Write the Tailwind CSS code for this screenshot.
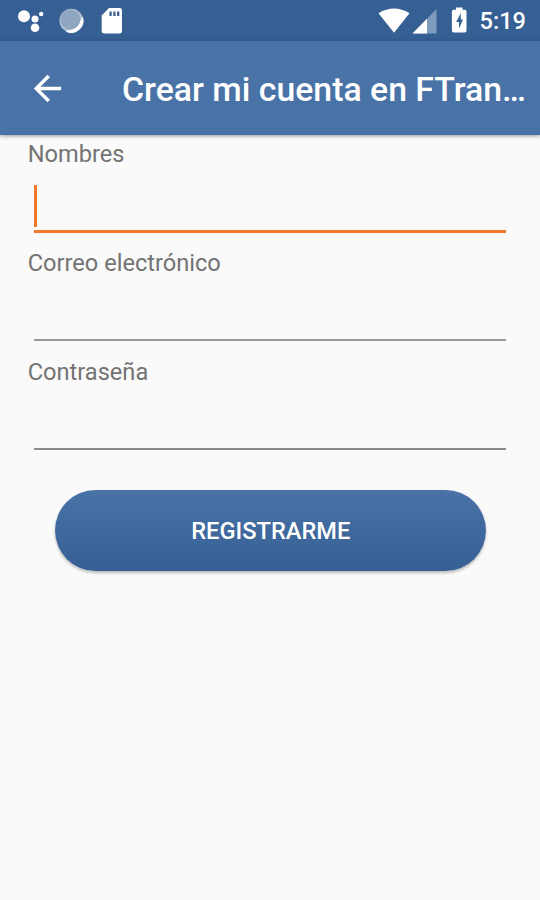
<!DOCTYPE html>
<html lang="es">
<head>
<meta charset="utf-8">
<title>Crear mi cuenta</title>
<script src="https://cdn.jsdelivr.net/npm/@tailwindcss/browser@4"></script>
</head>
<body class="h-[900px] w-[540px] overflow-hidden bg-[#fafafa] font-['Roboto',sans-serif]">
<div class="flex h-full flex-col">
  <div class="flex h-[41px] shrink-0 items-center justify-between bg-[#365f93] pr-[14px] text-white">
    <svg class="h-[41px] w-[130px]" viewBox="0 0 130 41" fill="#fff">
      <circle cx="24" cy="16.300" r="6"/><circle cx="35" cy="19" r="3.5"/><circle cx="41.2" cy="14" r="2.2"/><circle cx="35" cy="27.8" r="4.3"/>
      <circle cx="71.3" cy="20.7" r="11.9" fill="#aebfd2"/>
      <path d="M82.500 17A11.900 11.900 0 0 1 66 31.400Q79 30 82.500 17Z" fill="#fff" stroke="#fff" stroke-width=".8"/>
      <circle cx="70.3" cy="19.500" r="9.900" fill="#8fa6c0"/>
      <path d="M109 8H119.700Q122 8 122 10.300V31.200Q122 33.500 119.700 33.500H104Q101.700 33.500 101.700 31.200V15.500Z"/>
      <path d="M109.500 11.500h2.200v4.500h-2.200zM113.300 11.500h2.200v4.500h-2.200zM117.100 11.500h2.200v4.500h-2.200z" fill="#365f93"/>
    </svg>
    <div class="flex items-center">
      <svg class="h-[41px] w-[110px]" viewBox="370 0 110 41" fill="#fff">
        <path d="M378.500 13.200Q394 4 409.500 13.200L394 32.700Z"/>
        <path d="M436.500 9V33.500H412.500Z" fill="#7f9bbb"/>
        <path d="M427 18.700V33.500H412.500Z"/>
        <path d="M456 7.500h6.500v2.300h2.200q1.800 0 1.800 1.800v19.100q0 1.800-1.800 1.800h-11q-1.800 0-1.800-1.800V11.600q0-1.800 1.800-1.800H456Z"/>
        <path d="M460.800 13L456.200 22H459V28.500L463 19.500H460.800Z" fill="#365f93"/>
      </svg>
      <span class="pt-[2px] text-[23.6px] leading-[39px] font-medium">5:19</span>
    </div>
  </div>
  <header class="z-10 flex h-[94px] shrink-0 items-center bg-[#4973a7] pl-[27px] text-white shadow-[0_1px_4px_rgba(0,0,0,0.4)]">
    <svg class="h-[41px] w-[41px] shrink-0" viewBox="0 0 24 24" fill="#fff"><path d="M20 11H7.830l5.590-5.590L12 4l-8 8 8 8 1.410-1.410L7.830 13H20v-2z"/></svg>
    <h1 class="ml-[54px] pt-[3px] text-[33.800px] leading-[40px] font-medium whitespace-nowrap">Crear mi cuenta en FTran…</h1>
  </header>
  <main class="flex flex-col px-[27px] pt-[5px] text-[#737373]">
    <label class="flex h-[109px] flex-col text-[23.625px] leading-[28px]"><span class="pl-[0.700px]">Nombres</span>
      <span class="mx-[7px] mt-[17px] flex h-[48px] items-start border-b-3 border-[#f2772b]"><i class="h-[42px] w-[3px] bg-[#f2772b]"></i></span>
    </label>
    <label class="flex h-[109px] flex-col text-[23.625px] leading-[28px]"><span class="pl-[0.700px]">Correo electrónico</span>
      <span class="mx-[7px] mt-[17px] h-[47px] border-b-2 border-[#989898]"></span>
    </label>
    <label class="flex h-[109px] flex-col text-[23.625px] leading-[28px]"><span class="pl-[0.700px]">Contraseña</span>
      <span class="mx-[7px] mt-[17px] h-[47px] border-b-2 border-[#8b8b8b]"></span>
    </label>
    <button class="mr-[27px] ml-[27.500px] mt-[23px] h-[81px] rounded-full bg-linear-to-b from-[#4973a7] to-[#365f93] pt-[1px] pl-[1px] text-[23.625px] leading-[28px] font-medium text-white shadow-[0_2px_3px_rgba(0,0,0,0.26)]">REGISTRARME</button>
  </main>
</div>
</body>
</html>
